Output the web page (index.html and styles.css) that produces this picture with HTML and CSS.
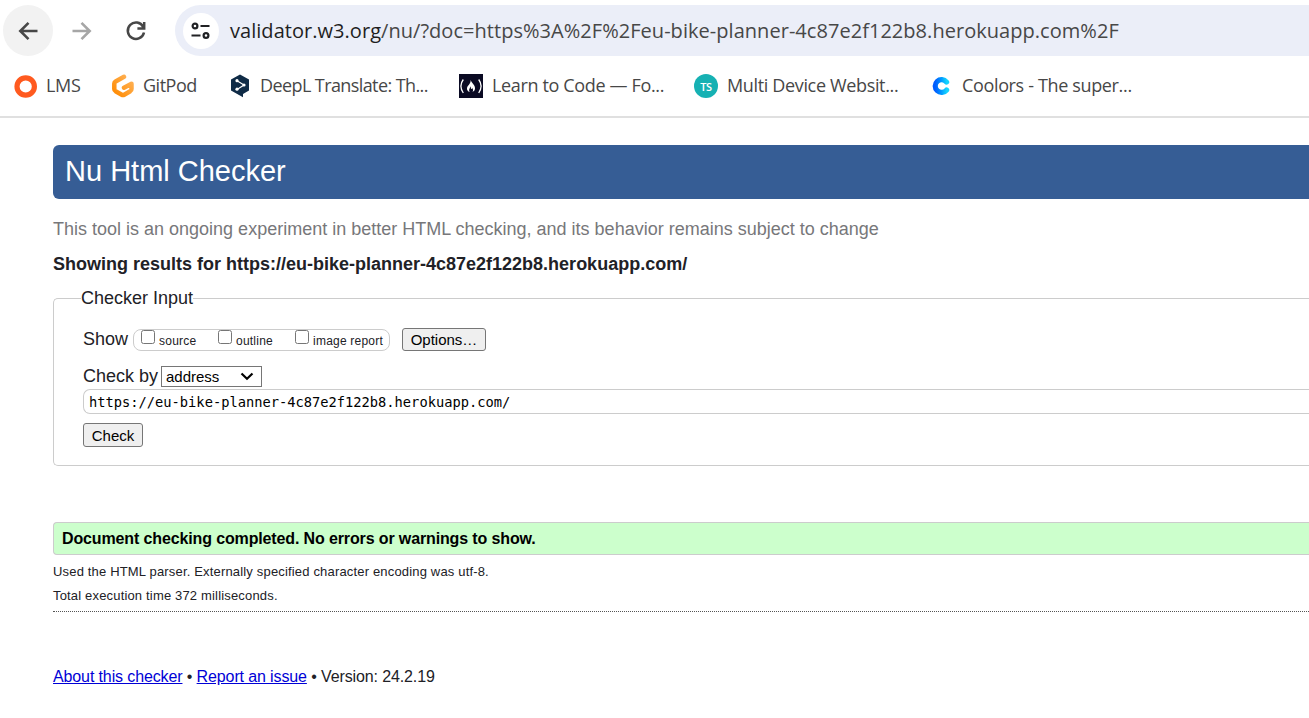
FILE: index.html
```html
<!DOCTYPE html>
<html lang="en">
<head>
<meta charset="utf-8">
<title>Nu Html Checker</title>
<link rel="stylesheet" href="styles.css">
</head>
<body>
<header class="browser">
  <div class="toolbar">
    <span class="nav-btn back"><svg width="24" height="24" viewBox="0 0 24 24" fill="none" stroke="#474747" stroke-width="2.600"><path d="M21.500 12H5M12.500 3.800 4.300 12l8.200 8.200"/></svg></span>
    <span class="nav-btn forward"><svg width="24" height="24" viewBox="0 0 24 24" fill="none" stroke="#a6a6a6" stroke-width="2.600"><path d="M2.500 12H19M11.500 3.800 19.700 12l-8.200 8.200"/></svg></span>
    <span class="nav-btn reload"><svg width="24" height="24" viewBox="0 0 24 24" fill="none" stroke="#474747" stroke-width="2.500"><path d="M19.200 7.800A8.200 8.200 0 1 0 20 13.500M20.200 3v6.600h-6.800"/></svg></span>
    <div class="address-bar">
      <span class="site-info"><svg width="20" height="18" viewBox="0 0 20 18" fill="none" stroke="#202124" stroke-width="2.200"><circle cx="4" cy="4" r="2.400"/><path d="M9.500 4h9M.500 13.500h9"/><circle cx="15" cy="13.500" r="2.400"/></svg></span>
      <span class="url"><span class="host">validator.w3.org</span>/nu/?doc=https%3A%2F%2Feu-bike-planner-4c87e2f122b8.herokuapp.com%2F</span>
    </div>
  </div>
  <nav class="bookmarks">
    <span class="bookmark b-lms"><svg width="24" height="24" viewBox="0 0 24 24"><circle cx="11.700" cy="12.500" r="8.700" fill="none" stroke="#ff5a1f" stroke-width="5.200"/></svg><span class="label">LMS</span></span>
    <span class="bookmark b-gitpod"><svg width="24" height="24" viewBox="0 0 24 24"><defs><linearGradient id="gp" x1="1" y1="0" x2="0" y2="1"><stop offset="0" stop-color="#ffb45b"/><stop offset="1" stop-color="#ff8a00"/></linearGradient></defs><path d="M13 2.800 4.600 7.500Q3.300 8.200 3.300 9.600V15q0 1.400 1.300 2.200l6.200 3.500q1.200.700 2.400 0l6-3.500q1.300-.800 1.300-2.200V9.800L13 13.700" fill="none" stroke="url(#gp)" stroke-width="4.500" stroke-linecap="round" stroke-linejoin="round"/></svg><span class="label">GitPod</span></span>
    <span class="bookmark b-deepl"><svg width="24" height="24" viewBox="0 0 24 24"><path d="M12 .500 21 5.500v11l-6 3.500v3.200L3 16.500V5.500Z" fill="#0f2b46"/><path d="m9 6.700 7 4.300-7 4.400" fill="none" stroke="#fff" stroke-width="1.200"/><circle cx="9" cy="6.700" r="1.600" fill="#fff"/><circle cx="16" cy="11" r="1.600" fill="#fff"/><circle cx="9" cy="15.200" r="1.600" fill="#fff"/></svg><span class="label">DeepL Translate: Th...</span></span>
    <span class="bookmark b-fcc"><svg width="24" height="24" viewBox="0 0 24 24"><path fill="#0a0a23" d="M0 0h24v24H0z"/><path d="M4.300 5.500Q-.500 12 4.300 19M19.700 5.500Q24.500 12 19.700 19" fill="none" stroke="#fff" stroke-width="1.300"/><path d="M11.700 6c1 3.500 4.700 5 4.300 8.800-.200 1.500-1 2.500-2.500 3.200 1-1.800.500-3-.500-4.300.100 1.100-.500 1.500-.9 1-.500-.500 0-1.600-.600-2.400-.300 1.800-2.200 3.200-.8 5.700-1.900-.700-2.900-2-2.700-3.800.300-2.700 3.700-4 3.700-8.200Z" fill="#fff"/></svg><span class="label">Learn to Code — Fo...</span></span>
    <span class="bookmark b-ts"><span class="ts-logo">TS</span><span class="label">Multi Device Websit...</span></span>
    <span class="bookmark b-coolors"><svg width="24" height="24" viewBox="0 0 24 24" fill="none" stroke-width="5.200"><defs><linearGradient id="co"><stop offset="0" stop-color="#005cff"/><stop offset=".5" stop-color="#0095ff"/><stop offset="1" stop-color="#14d3ff"/></linearGradient></defs><path d="M16.600 8A6.400 6.400 0 1 0 16.600 16" stroke="url(#co)" stroke-linecap="round"/></svg><span class="label">Coolors - The super...</span></span>
  </nav>
</header>
<main class="checker">
  <h1 class="banner">Nu Html Checker</h1>
  <p class="notice">This tool is an ongoing experiment in better HTML checking, and its behavior remains subject to change</p>
  <h2 class="results-title">Showing results for https://eu-bike-planner-4c87e2f122b8.herokuapp.com/</h2>
  <fieldset class="input-panel">
    <legend>Checker Input</legend>
    <div class="show-row">
      <span class="field-label">Show</span>
      <div class="show-options">
        <label class="opt source"><input type="checkbox"><span>source</span></label>
        <label class="opt outline"><input type="checkbox"><span>outline</span></label>
        <label class="opt image"><input type="checkbox"><span>image report</span></label>
      </div>
      <button class="btn options">Options…</button>
    </div>
    <div class="method-row">
      <span class="field-label check-by">Check by</span>
      <div class="method">address<svg width="14" height="9" viewBox="0 0 14 9" fill="none" stroke="#000" stroke-width="2.200"><path d="m1.500 1.500 5.500 5.200 5.500-5.200"/></svg></div>
    </div>
    <div class="doc-url">https://eu-bike-planner-4c87e2f122b8.herokuapp.com/</div>
    <button class="btn check">Check</button>
  </fieldset>
  <p class="success">Document checking completed. No errors or warnings to show.</p>
  <p class="details">Used the HTML parser. Externally specified character encoding was utf-8.</p>
  <p class="details">Total execution time 372 milliseconds.</p>
  <hr class="rule">
  <footer class="about"><a href="#">About this checker</a> • <a href="#">Report an issue</a> • Version: 24.2.19</footer>
</main>
</body>
</html>
```
FILE: styles.css
```css
* { box-sizing: border-box; }
body { margin: 0; width: 1309px; height: 718px; overflow: hidden; background: #fff; color: #212126; font-family: "Liberation Sans", Arial, sans-serif; }
h1, h2, p { margin: 0; white-space: nowrap; }
svg { display: block; flex: none; }

.browser { height: 118px; padding-top: 5px; border-bottom: 2px solid #e0e0e0; font-family: "Open Sans", "Segoe UI", sans-serif; }
.toolbar { display: flex; height: 51px; padding-left: 3px; }
.nav-btn { display: flex; align-items: center; justify-content: center; width: 50px; height: 51px; border-radius: 50%; }
.back { background: #f2f2f2; }
.forward { margin-left: 4px; }
.reload { margin-left: 4px; }
.address-bar { display: flex; align-items: center; flex: 1; margin-left: 14px; padding-left: 8px; background: #ebeef8; border-radius: 26px 0 0 26px; }
.site-info { display: flex; align-items: center; justify-content: center; width: 36px; height: 36px; border-radius: 50%; background: #fff; }
.url { margin-left: 11px; font-size: 20px; letter-spacing: .04px; color: #474747; white-space: nowrap; }
.host { color: #1f1f1f; }

.bookmarks { display: flex; height: 60px; padding-left: 14px; align-items: center; }
.bookmark { display: flex; align-items: center; gap: 8px; font-size: 18px; letter-spacing: -.35px; color: #474747; white-space: nowrap; }
.label { line-height: 24px; padding-bottom: 2px; }
.b-lms { width: 97px; }
.b-gitpod { width: 117px; letter-spacing: -.5px; }
.b-deepl { width: 231px; letter-spacing: -.59px; }
.b-fcc { width: 235px; gap: 9px; }
.b-ts { width: 236px; gap: 9px; }
.ts-logo { display: flex; align-items: center; justify-content: center; width: 24px; height: 24px; border-radius: 50%; background: #16b1b3; color: #fff; font-size: 11px; font-weight: 600; }

.checker { padding: 27px 0 0 53px; }
.banner { height: 54px; padding-left: 12px; border-radius: 6px 0 0 6px; background: #365d95; color: #fff; font-size: 29px; font-weight: 400; line-height: 52px; }
.notice { margin-top: 17px; height: 26px; font-size: 18px; line-height: 26px; color: #77777a; }
.results-title { margin-top: 9px; height: 26px; font-size: 18px; line-height: 26px; }
.input-panel { display: block; height: 178px; margin: 11px 0 0; padding: 19px 0 0 29px; border: 1px solid #ccc; border-right: 0; border-radius: 5px 0 0 5px; font-size: 18px; }
.input-panel legend { height: 21px; line-height: 20px; margin-left: -2px; padding: 0; }
.show-row { display: flex; height: 23px; align-items: center; }
.field-label { line-height: 23px; white-space: nowrap; }
.show-options { display: flex; width: 257px; height: 22px; margin-left: 5px; border: 1px solid #ccc; border-radius: 8px; font-size: 12px; letter-spacing: .22px; white-space: nowrap; padding-left: 7px; }
.opt { display: flex; gap: 4px; line-height: 22px; }
.opt input { width: 14px; height: 14px; margin: 0; }
.source { width: 77px; }
.outline { width: 77px; }
.btn { display: block; padding: 0; border: 1px solid #767676; border-radius: 3px; background: #efefef; color: #000; font-family: inherit; font-size: 15px; white-space: nowrap; }
.options { width: 84px; height: 23px; margin-left: 12px; }
.method-row { display: flex; height: 22px; margin-top: 14px; align-items: center; }
.check-by { width: 78px; line-height: 20px; }
.method { display: flex; width: 101px; height: 21px; align-items: center; justify-content: space-between; padding: 0 7px 0 4px; border: 1px solid #767676; color: #000; font-size: 15px; }
.doc-url { height: 25px; margin-top: 2px; padding-left: 5px; border: 1px solid #ccc; border-right: 0; border-radius: 7px 0 0 7px; color: #000; font: 13.720px/24px "DejaVu Sans Mono", Consolas, monospace; white-space: nowrap; }
.check { width: 60px; height: 24px; margin-top: 9px; }
.success { height: 33px; margin-top: 56px; padding-left: 8px; border: 1px solid #ccc; border-right: 0; border-radius: 4px 0 0 4px; background: #cfc; color: #000; font-size: 16px; font-weight: 700; letter-spacing: -.13px; line-height: 31px; }
.details { height: 24px; font-size: 13px; letter-spacing: .17px; line-height: 24px; }
.success + .details { margin-top: 5px; }
.rule { height: 0; margin: 3px 0 0; border: 0; border-top: 1px dotted #555; }
.about { margin-top: 55px; font-size: 16px; letter-spacing: -.12px; line-height: 20px; white-space: nowrap; }
.about a { color: #0000d6; }
```
